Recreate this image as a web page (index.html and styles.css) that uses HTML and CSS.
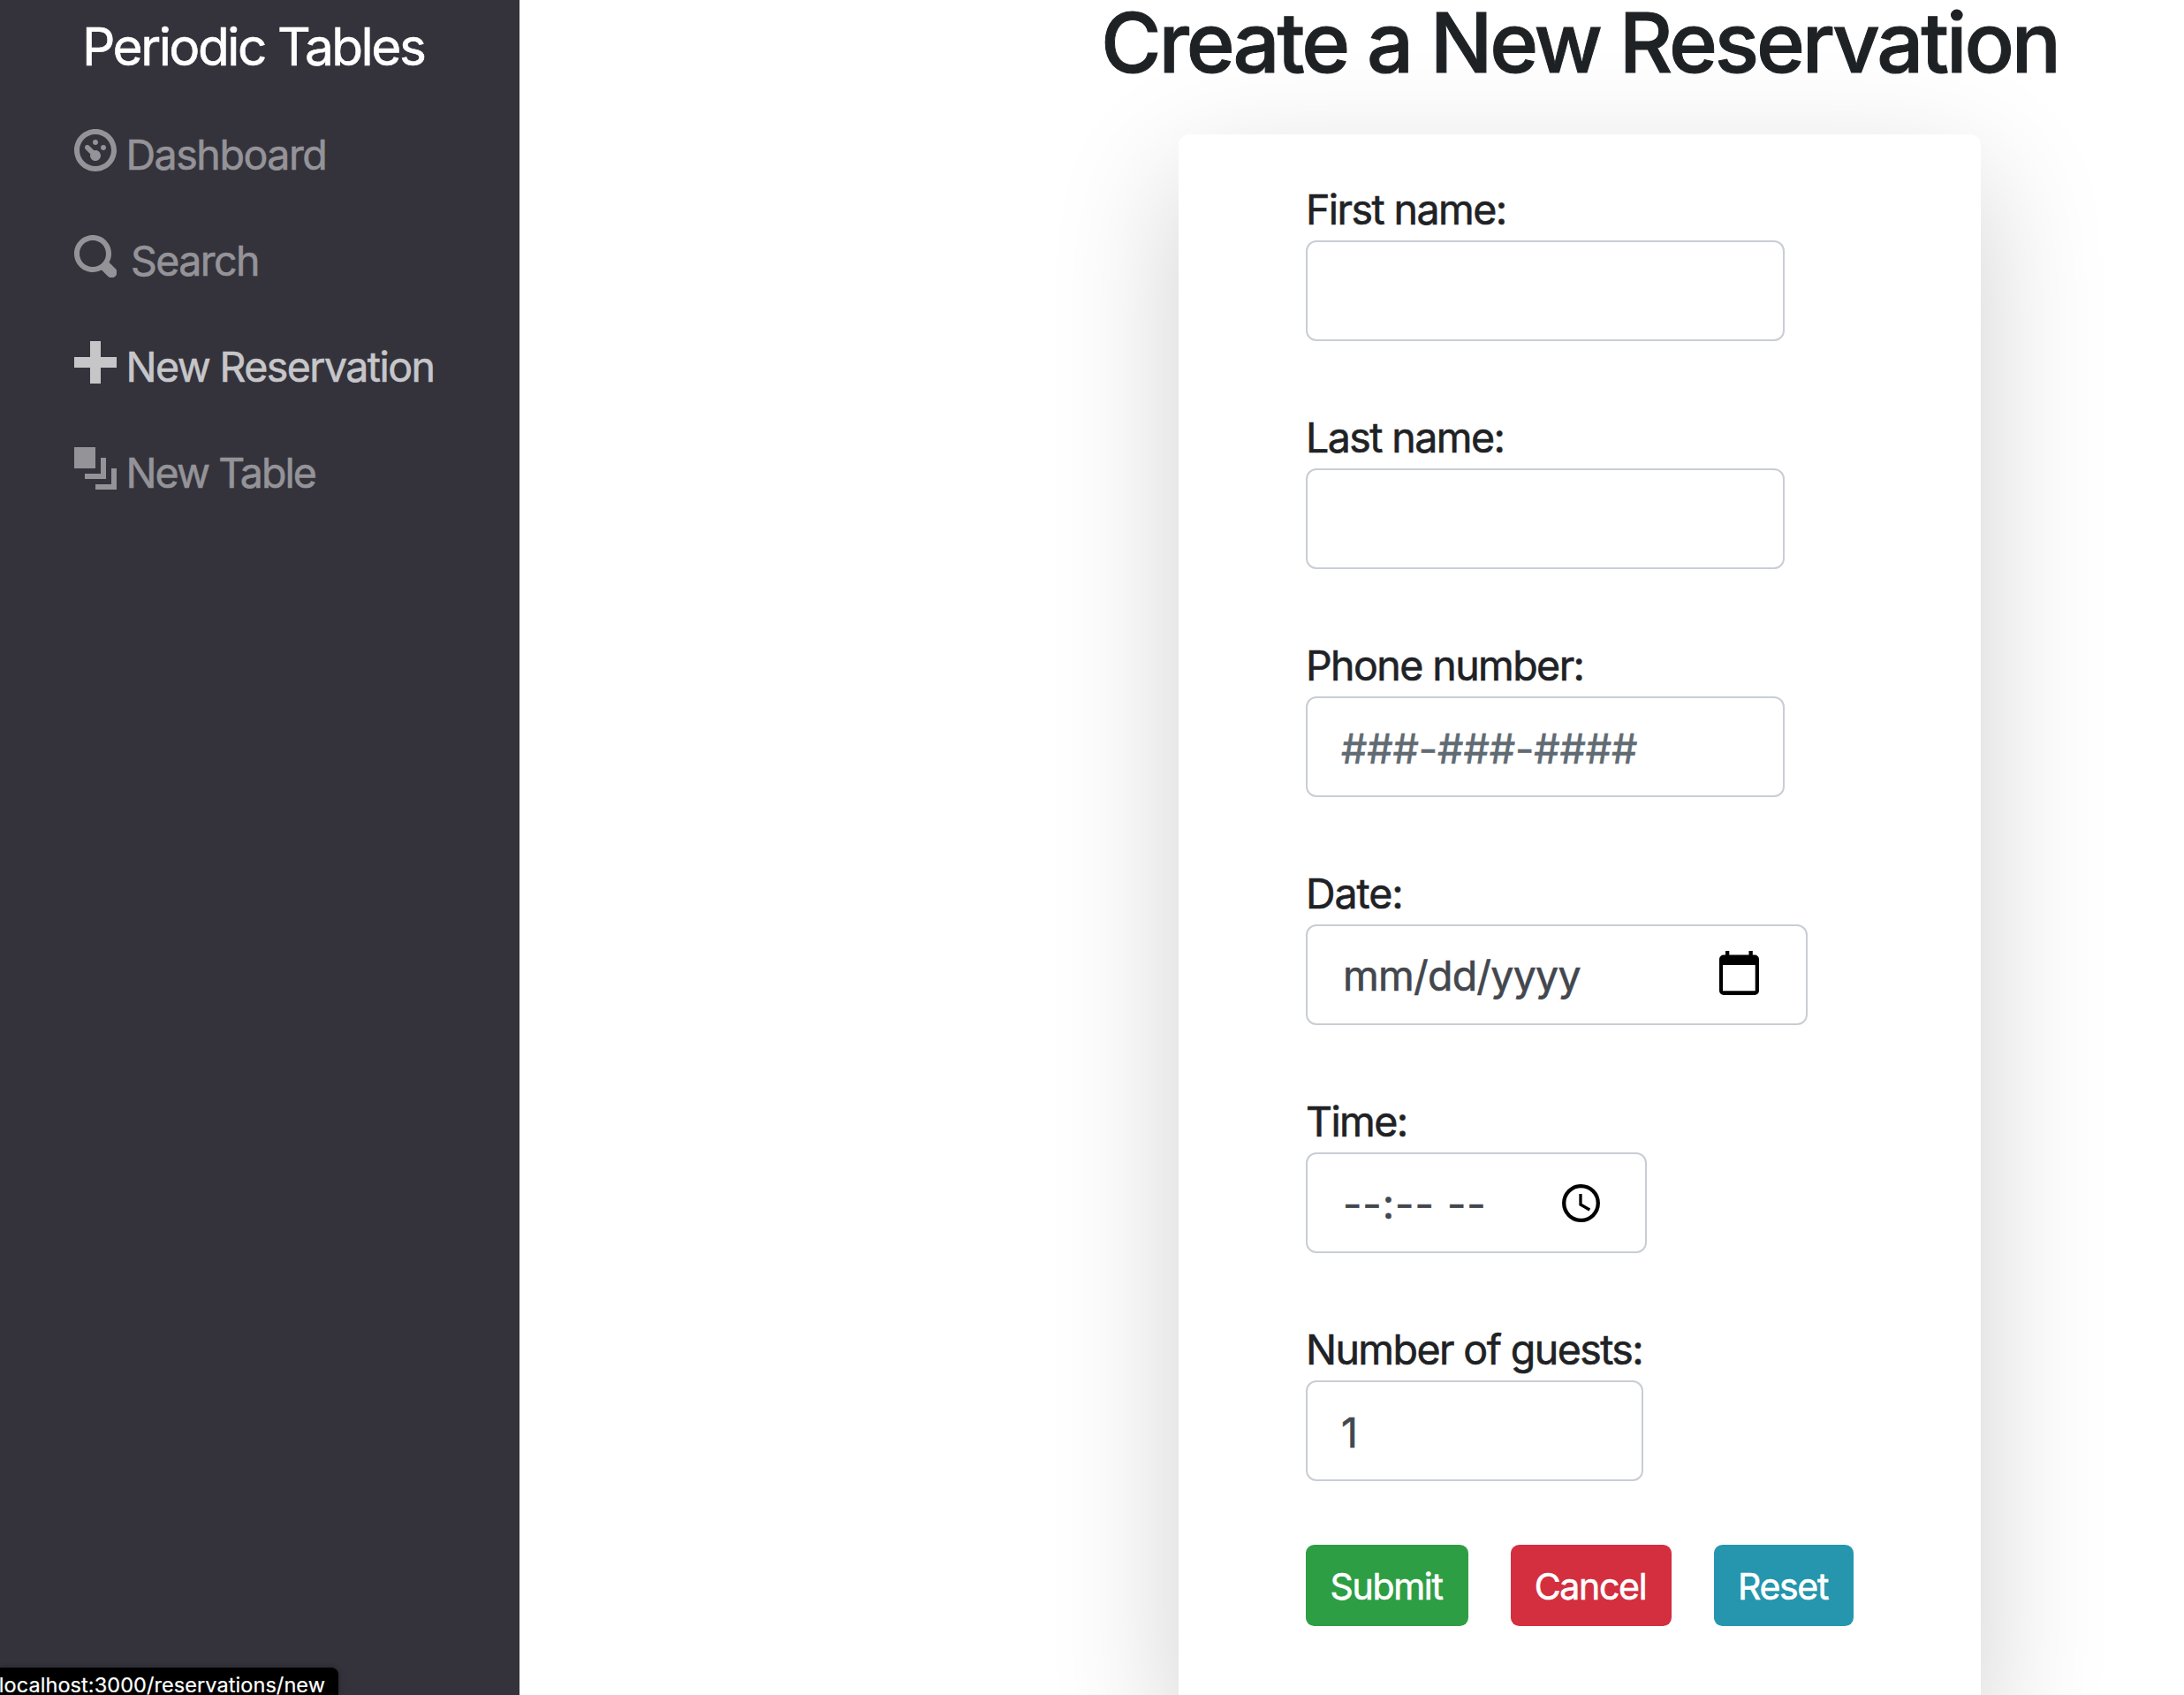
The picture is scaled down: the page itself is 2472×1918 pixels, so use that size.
FILE: index.html
```html
<!DOCTYPE html>
<html lang="en">
<head>
<meta charset="utf-8">
<title>Periodic Tables</title>
<link rel="stylesheet" href="styles.css">
</head>
<body>
<div class="layout">
  <nav class="sidebar">
    <a class="brand">Periodic Tables</a>
    <ul class="nav">
      <li class="nav-item"><svg class="oi" viewBox="0 0 8 8"><path d="M4 0c-2.2 0-4 1.8-4 4s1.8 4 4 4 4-1.8 4-4-1.8-4-4-4zm0 1c1.66 0 3 1.34 3 3s-1.34 3-3 3-3-1.34-3-3 1.34-3 3-3zm0 1c-.28 0-.5.22-.5.5s.22.5.5.5.5-.22.5-.5-.22-.5-.5-.5zm-1.66 1a.5.5 0 0 0-.19.84l.91.91c-.02.08-.06.16-.06.25 0 .55.45 1 1 1s1-.45 1-1-.45-1-1-1c-.09 0-.17.04-.25.06l-.91-.91a.5.5 0 0 0-.44-.16.5.5 0 0 0-.06 0zm3.16 0c-.28 0-.5.22-.5.5s.22.5.5.5.5-.22.5-.5-.22-.5-.5-.5z"/></svg><span class="nav-text dashboard">Dashboard</span></li>
      <li class="nav-item"><svg class="oi" viewBox="0 0 8 8"><path d="M3.5 0c-1.93 0-3.5 1.57-3.5 3.5s1.57 3.5 3.5 3.5c.59 0 1.17-.14 1.66-.41a1 1 0 0 0 .13.13l1 1a1.02 1.02 0 1 0 1.44-1.44l-1-1a1 1 0 0 0-.16-.13c.27-.49.44-1.06.44-1.66 0-1.93-1.55-3.5-3.5-3.5zm0 1c1.39 0 2.5 1.11 2.5 2.5 0 .66-.24 1.27-.66 1.72l-.03.03a1 1 0 0 0-.13.13c-.44.4-1.04.63-1.69.63-1.39 0-2.5-1.11-2.5-2.5s1.11-2.5 2.5-2.5z"/></svg><span class="nav-text search">Search</span></li>
      <li class="nav-item active"><svg class="oi" viewBox="0 0 8 8"><path d="M3 0v3h-3v2h3v3h2v-3h3v-2h-3v-3h-2z"/></svg><span class="nav-text">New Reservation</span></li>
      <li class="nav-item"><svg class="oi" viewBox="0 0 8 8"><path d="M0 0v4h4v-4h-4zm5 2v3h-3v1h4v-4h-1zm2 2v3h-3v1h4v-4h-1z"/></svg><span class="nav-text new-table">New Table</span></li>
    </ul>
  </nav>
  <main class="main">
    <h1 class="title">Create a New Reservation</h1>
    <form class="card">
      <div class="group">
        <label class="label">First name:</label>
        <input class="control" type="text">
      </div>
      <div class="group">
        <label class="label">Last name:</label>
        <input class="control" type="text">
      </div>
      <div class="group">
        <label class="label">Phone number:</label>
        <input class="control" type="text" placeholder="###-###-####">
      </div>
      <div class="group">
        <label class="label date-label">Date:</label>
        <div class="control picker date"><span class="value">mm/dd/yyyy</span>
          <svg class="calendar" viewBox="0 0 45 50"><path fill-rule="evenodd" d="M7 0h4.3v4.5h22.2V0h4.3v4.5H40a5 5 0 0 1 5 5V45a5 5 0 0 1-5 5H5a5 5 0 0 1-5-5V9.500a5 5 0 0 1 5-5h2zM4 16v29.300h36.700V16z"/></svg>
        </div>
      </div>
      <div class="group">
        <label class="label">Time:</label>
        <div class="control picker time"><span class="value">--:-- --</span>
          <svg class="clock" viewBox="0 0 43 43"><circle cx="21.500" cy="21.500" r="19.300"/><path d="M21 11v12l10.300 6"/></svg>
        </div>
      </div>
      <div class="group">
        <label class="label">Number of guests:</label>
        <input class="control guests" type="text" value="1">
      </div>
      <div class="actions">
        <button class="btn submit" type="button">Submit</button>
        <button class="btn cancel" type="button">Cancel</button>
        <button class="btn reset" type="button">Reset</button>
      </div>
    </form>
  </main>
</div>
<div class="status">localhost:3000/reservations/new</div>
</body>
</html>
```
FILE: styles.css
```css
*, *::before, *::after { box-sizing: border-box; }

body {
  margin: 0;
  height: 1918px;
  overflow: hidden;
  background: #fff;
  color: #1f2225;
  font: 400 46.5px/72px Inter, "Liberation Sans", sans-serif;
  letter-spacing: -1.58px;
  -webkit-text-stroke: .6px currentColor;
}

.layout { display: flex; height: 1918px; overflow: hidden; }

/* Sidebar */
.sidebar {
  flex: 0 0 588px;
  display: flex;
  flex-direction: column;
  gap: 40px;
  padding-top: 8px;
  background: #34333c;
}
.brand {
  padding-left: 93px;
  color: #fff;
  font-size: 58.5px;
  line-height: 90px;
  letter-spacing: -2.48px;
  white-space: nowrap;
}
.nav {
  display: flex;
  flex-direction: column;
  gap: 48px;
  margin: 0;
  padding: 0 0 0 84px;
  list-style: none;
}
.nav-item {
  display: flex;
  align-items: flex-start;
  gap: 10.500px;
  height: 72px;
  color: #949398;
  white-space: nowrap;
}
.nav-item.active { color: #c6c6c9; }
.nav-text { padding-top: 2px; line-height: 70px; }
.oi { width: 48px; height: 48px; margin-top: 8px; fill: currentColor; }
.dashboard { letter-spacing: -1.45px; }
.search { padding-left: 5.500px; }
.new-table { letter-spacing: -1.94px; }

/* Reservation form */
.main {
  flex: 1;
  display: flex;
  flex-direction: column;
  align-items: center;
  padding-left: 516px;
}
.title {
  margin: 0 0 41px;
  padding-bottom: 15px;
  font-size: 93.5px;
  font-weight: 500;
  line-height: 96px;
  letter-spacing: -3.12px;
  white-space: nowrap;
  -webkit-text-stroke-width: 1px;
}
.card {
  flex: none;
  width: 908px;
  height: 1784px;
  padding: 48px 144px;
  border-radius: 12px;
  background: #fff;
  box-shadow: 0 48px 144px rgba(0, 0, 0, .19);
}
.group {
  display: flex;
  flex-direction: column;
  align-items: flex-start;
  margin-bottom: 72px;
}
.label { height: 72px; padding-top: 2px; line-height: 70px; }
.date-label { letter-spacing: -1.08px; }
.control {
  width: 542px;
  height: 114px;
  padding: 4px 38px 0;
  border: 2px solid #c9cdd4;
  border-radius: 12px;
  background: #fff;
  color: #43474e;
  font: inherit;
  letter-spacing: -.16px;
}
.control::placeholder { color: #616b73; opacity: 1; }
.picker {
  display: flex;
  align-items: center;
  justify-content: space-between;
  padding: 0 52px 0 40px;
  white-space: pre;
}
.value { padding-top: 2px; }
.date { width: 568px; padding-right: 53px; letter-spacing: -.76px; }
.time { width: 386px; padding-right: 51px; letter-spacing: .98px; }
.guests { width: 382px; }
.calendar { width: 45px; height: 50px; margin-bottom: 4px; }
.clock { width: 43px; height: 43px; fill: none; stroke: #000; stroke-width: 4.300; }
.clock path { stroke-width: 3.300; }

.actions { display: flex; gap: 48px; }
.btn {
  height: 92px;
  padding: 2px 2px 0 0;
  border: 0;
  border-radius: 9.600px;
  color: #fff;
  font: inherit;
  font-size: 41px;
  letter-spacing: -1.3px;
}
.submit { width: 184px; background: #2e9e45; }
.cancel { width: 182px; background: #d32f3f; }
.reset { width: 158px; background: #2596ad; }

/* Browser link preview */
.status {
  position: absolute;
  left: 0;
  bottom: 0;
  display: flex;
  justify-content: flex-end;
  width: 383px;
  height: 31px;
  padding-right: 15px;
  overflow: hidden;
  border-radius: 0 8px 0 0;
  background: #000;
  color: #fff;
  font-size: 23.5px;
  line-height: 40px;
  letter-spacing: .07px;
  box-shadow: 0 0 6px rgba(0, 0, 0, .35);
  white-space: nowrap;
  -webkit-text-stroke-width: .2px;
}
```
